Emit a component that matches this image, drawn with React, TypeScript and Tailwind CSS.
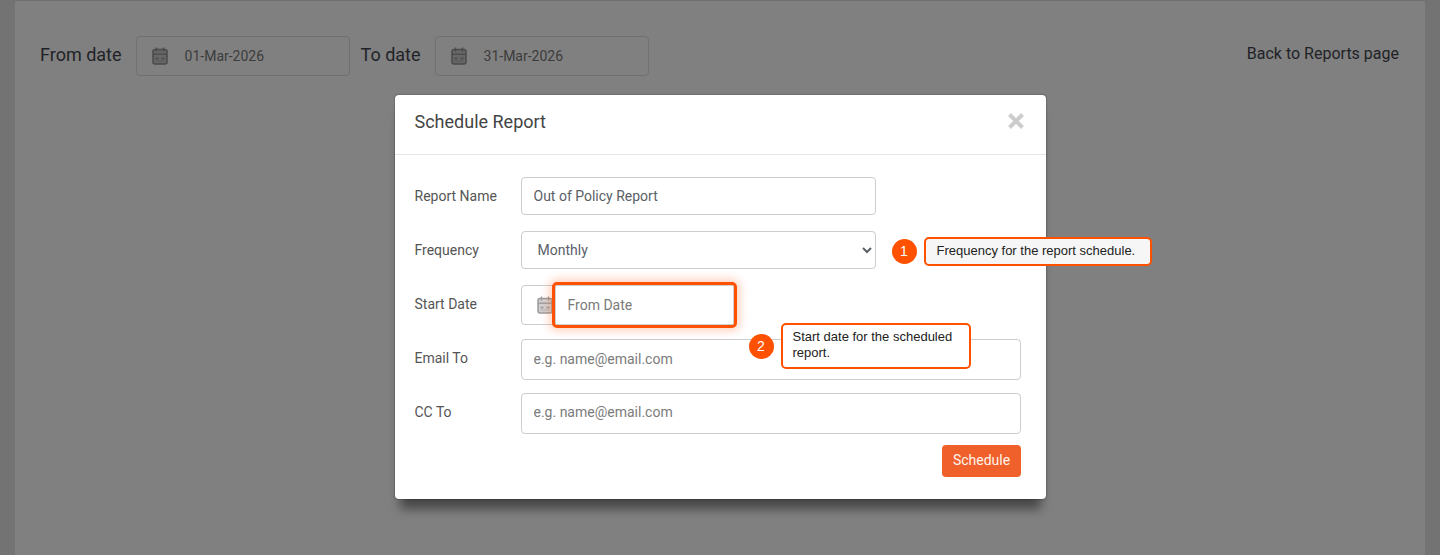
function CalendarIcon({ className }: { className?: string }) {
  return (
    <svg className={className} width="16" height="18" viewBox="0 0 16 18" fill="none" stroke="currentColor">
      <path d="M4.5 0.5v4M11.5 0.5v4" strokeWidth="1.4" />
      <rect x="1" y="2.5" width="14" height="14.5" rx="2" strokeWidth="1.5" fill="currentColor" fillOpacity="0.45" />
      <path d="M1 7.2h14" strokeWidth="1.3" />
      <path d="M3.5 11.5h3M9.5 11.5h3" strokeWidth="1.3" />
      <path d="M3.5 14h9" strokeWidth="1" opacity="0.5" />
    </svg>
  );
}

function DateFilter({ value }: { value: string }) {
  return (
    <div className="flex h-[40px] w-[214px] items-center rounded border border-[#707070] pl-[15px]">
      <CalendarIcon className="text-[#4a4a4a]" />
      <span className="ml-[17px] pt-[1px] text-[14px] text-[#3c3c3c]">{value}</span>
    </div>
  );
}

function Row({ label, labelClass, children }: { label: string; labelClass?: string; children: React.ReactNode }) {
  return (
    <div className="flex items-center">
      <label className={`w-[106px] text-[14px] text-[#555555] ${labelClass ?? ''}`}>{label}</label>
      {children}
    </div>
  );
}

const inputClass =
  'rounded border border-[#cdcdcd] bg-white px-[12px] text-[14px] text-[#5a6067] placeholder:text-[#7b7b7b] outline-none';

export default function App() {
  return (
    <div className="relative h-[555px] overflow-hidden bg-[#737373] font-['Roboto',sans-serif]">
      <div className="mx-[15px] h-full border-t border-[#6e6e6e] bg-[#808080] pl-[25px] pr-[26px] pt-[35px]">
        <div className="flex items-center">
          <span className="mr-[14px] -mt-[4px] text-[18px] text-[#1f2327]">From date</span>
          <DateFilter value="01-Mar-2026" />
          <span className="ml-[11px] mr-[14px] -mt-[4px] text-[18px] text-[#1f2327]">To date</span>
          <DateFilter value="31-Mar-2026" />
          <span className="ml-auto -mt-[5px] text-[16px] text-[#1f2327]">Back to Reports page</span>
        </div>
      </div>

      <div className="absolute inset-0 flex justify-center pt-[95px]">
        <div className="relative h-[404px] w-[651px] rounded bg-white shadow-[0_15px_10px_-5px_rgba(0,0,0,0.45),0_0_2px_rgba(0,0,0,0.5)]">
          <div className="flex h-[60px] items-center justify-between border-b border-[#e5e5e5] pl-[20px] pr-[21px]">
            <h2 className="-mt-[6px] text-[18px] font-normal text-[#444444]">Schedule Report</h2>
            <svg width="18" height="18" viewBox="0 0 18 18" className="-mt-[8px] text-[#cccccc]">
              <path d="M2.5 2.5L15.5 15.5M15.5 2.5L2.5 15.5" stroke="currentColor" strokeWidth="4" />
            </svg>
          </div>

          <div className="flex flex-col pl-[20px] pr-[25px] pt-[22px]">
            <Row label="Report Name">
              <input readOnly value="Out of Policy Report" className={`${inputClass} h-[38px] w-[355px]`} />
            </Row>
            <div className="mt-[16px]">
              <Row label="Frequency">
                <select className={`${inputClass} h-[38px] w-[355px]`} defaultValue="Monthly">
                  <option>Monthly</option>
                </select>
              </Row>
            </div>
            <div className="mt-[16px]">
              <Row label="Start Date" labelClass="-mt-[1px]">
                <div className="relative flex h-[40px] w-[214px] items-center rounded border border-[#cdcdcd] pl-[15px]">
                  <CalendarIcon className="text-[#9a9a9a]" />
                  <div className="absolute left-[30px] top-[-4px] flex h-[46px] w-[185px] items-center rounded-[5px] border-[3px] border-[#ff5100] bg-white pl-[13px] shadow-[0_0_8px_3px_rgba(255,81,0,0.25),inset_0_0_0_1px_#d0d0d0]">
                    <span className="text-[14px] text-[#7b7b7b]">From Date</span>
                  </div>
                </div>
              </Row>
            </div>
            <div className="mt-[14px]">
              <Row label="Email To" labelClass="-mt-[2px]">
                <input
                  readOnly
                  placeholder="e.g. name@email.com"
                  className={`${inputClass} h-[41px] w-[500px] pb-[2px]`}
                />
              </Row>
            </div>
            <div className="mt-[13px]">
              <Row label="CC To" labelClass="-mt-[2px]">
                <input
                  readOnly
                  placeholder="e.g. name@email.com"
                  className={`${inputClass} h-[41px] w-[500px] pb-[3px]`}
                />
              </Row>
            </div>
            <div className="mt-[11px] flex justify-end">
              <button className="h-[32px] w-[79px] rounded bg-[#f0602a] pb-[2px] pl-[1px] text-[14px] text-[#fff4ee]">
                Schedule
              </button>
            </div>
          </div>

          {/* step callouts */}
          <div className="absolute left-[497px] top-[142px] flex items-center gap-[7px] font-['Liberation_Sans',sans-serif]">
            <span className="flex h-[25px] w-[25px] items-center justify-center rounded-full bg-[#ff5100] text-[14px] text-white">
              1
            </span>
            <div className="flex h-[29px] w-[228px] items-center rounded-[5px] border-2 border-[#ff5100] bg-[#f6f6f6] pb-[2px] pl-[10px] text-[13px] text-[#222222]">
              <span className="ml-[1px]">Frequency for the report schedule.</span>
            </div>
          </div>
          <div className="absolute left-[354px] top-[228px] flex items-center gap-[7px] font-['Liberation_Sans',sans-serif]">
            <span className="flex h-[25px] w-[25px] items-center justify-center rounded-full bg-[#ff5100] text-[14px] text-white">
              2
            </span>
            <div className="flex h-[46px] w-[190px] items-center rounded-[5px] border-2 border-[#ff5100] bg-white pb-[2px] pl-[10px] pr-[8px] text-[13px] leading-[16px] text-[#222222]">
              Start date for the scheduled report.
            </div>
          </div>
        </div>
      </div>
    </div>
  );
}
